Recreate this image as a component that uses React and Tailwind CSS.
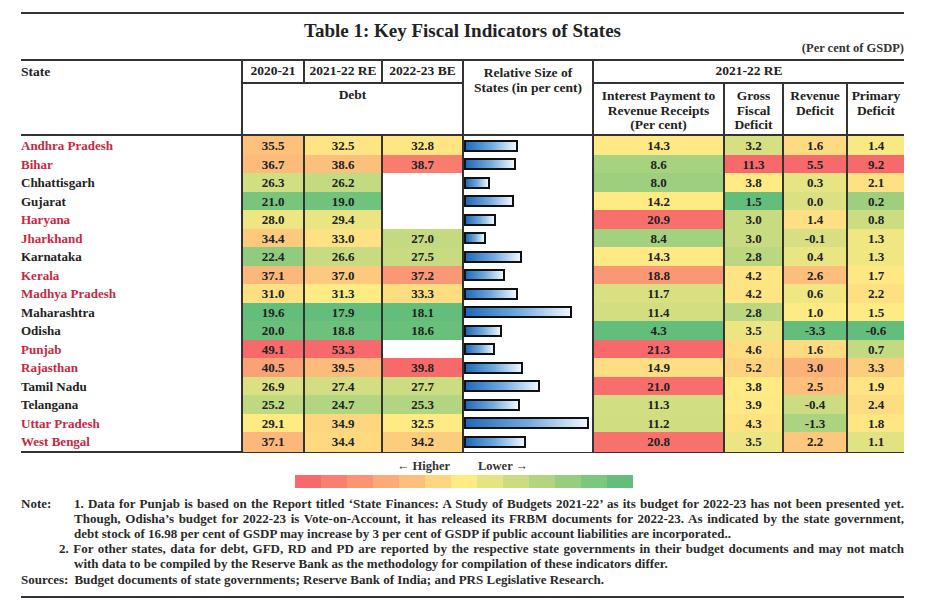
import React from "react";

const COLS =
  "grid grid-cols-[220px_62px_78px_81px_130px_131px_59px_64px_58px]";

const rows = [
  ["Andhra Pradesh", true, 35.5, 32.5, 32.8, 54, 14.3, 3.2, 1.6, 1.4],
  ["Bihar", true, 36.7, 38.6, 38.7, 52, 8.6, 11.3, 5.5, 9.2],
  ["Chhattisgarh", false, 26.3, 26.2, null, 26, 8.0, 3.8, 0.3, 2.1],
  ["Gujarat", false, 21.0, 19.0, null, 50, 14.2, 1.5, 0.0, 0.2],
  ["Haryana", true, 28.0, 29.4, null, 32, 20.9, 3.0, 1.4, 0.8],
  ["Jharkhand", true, 34.4, 33.0, 27.0, 22, 8.4, 3.0, -0.1, 1.3],
  ["Karnataka", false, 22.4, 26.6, 27.5, 58, 14.3, 2.8, 0.4, 1.3],
  ["Kerala", true, 37.1, 37.0, 37.2, 41, 18.8, 4.2, 2.6, 1.7],
  ["Madhya Pradesh", true, 31.0, 31.3, 33.3, 54, 11.7, 4.2, 0.6, 2.2],
  ["Maharashtra", false, 19.6, 17.9, 18.1, 108, 11.4, 2.8, 1.0, 1.5],
  ["Odisha", false, 20.0, 18.8, 18.6, 38, 4.3, 3.5, -3.3, -0.6],
  ["Punjab", true, 49.1, 53.3, null, 31, 21.3, 4.6, 1.6, 0.7],
  ["Rajasthan", true, 40.5, 39.5, 39.8, 59, 14.9, 5.2, 3.0, 3.3],
  ["Tamil Nadu", false, 26.9, 27.4, 27.7, 76, 21.0, 3.8, 2.5, 1.9],
  ["Telangana", false, 25.2, 24.7, 25.3, 56, 11.3, 3.9, -0.4, 2.4],
  ["Uttar Pradesh", true, 29.1, 34.9, 32.5, 125, 11.2, 4.3, -1.3, 1.8],
  ["West Bengal", true, 37.1, 34.4, 34.2, 62, 20.8, 3.5, 2.2, 1.1],
];

const GREEN = [99, 190, 123];
const YEL = [255, 235, 132];
const RED = [248, 105, 107];

function lerp(a, b, t) {
  return a.map((v, i) => Math.round(v + (b[i] - v) * t));
}
function rgb(c) {
  return `rgb(${c[0]},${c[1]},${c[2]})`;
}
function median(arr) {
  const s = [...arr].sort((a, b) => a - b);
  const n = s.length;
  return n % 2 ? s[(n - 1) / 2] : (s[n / 2 - 1] + s[n / 2]) / 2;
}
const numericIdx = [2, 3, 4, 6, 7, 8, 9];
const stats = {};
numericIdx.forEach((k) => {
  const vals = rows.map((r) => r[k]).filter((v) => v !== null);
  stats[k] = { min: Math.min(...vals), max: Math.max(...vals), mid: median(vals) };
});
function cellColor(k, v) {
  if (v === null) return "#ffffff";
  const { min, mid, max } = stats[k];
  if (v <= mid) {
    const t = mid === min ? 1 : (v - min) / (mid - min);
    return rgb(lerp(GREEN, YEL, t));
  }
  const t = (v - mid) / (max - mid);
  return rgb(lerp(YEL, RED, t));
}

const legend = Array.from({ length: 13 }, (_, i) =>
  i <= 6 ? rgb(lerp(RED, YEL, i / 6)) : rgb(lerp(YEL, GREEN, (i - 6) / 6))
);

function NumCell({ k, v }) {
  return (
    <div
      className="border-l-2 border-[#333] flex items-center justify-center text-[13px] text-[#222]"
      style={{ backgroundColor: cellColor(k, v) }}
    >
      {v === null ? "" : v.toFixed(1)}
    </div>
  );
}

export default function App() {
  return (
    <div className="w-[937px] h-[605px] bg-white font-['Liberation_Serif',serif] font-bold text-[#222] overflow-hidden">
      <div className="ml-[21px] w-[883px] pt-[12px]">
        <div className="h-[2px] bg-[#333]" />
        <div className="mt-[5px] h-[24px] leading-[24px] text-center text-[19px]">
          Table 1: Key Fiscal Indicators of States
        </div>
        <div className="-mt-[2px] h-[14px] leading-[14px] text-right text-[12.5px] text-[#333]">
          (Per cent of GSDP)
        </div>
        <div className="mt-[4px] h-[2px] bg-[#333]" />

        {/* Header */}
        <div className={`${COLS} grid-rows-[23px_50px] text-[13.5px] leading-[14.5px]`}>
          <div className="row-span-2 pt-[4px]">State</div>
          <div className="border-l-2 border-b-2 border-[#333] flex items-center justify-center">
            2020-21
          </div>
          <div className="border-l-2 border-b-2 border-[#333] flex items-center justify-center">
            2021-22 RE
          </div>
          <div className="border-l-2 border-b-2 border-[#333] flex items-center justify-center">
            2022-23 BE
          </div>
          <div className="row-span-2 border-l-2 border-[#333] pt-[4px] text-center leading-[15px]">
            Relative Size of
            <br />
            States (in per cent)
          </div>
          <div className="col-span-4 border-l-2 border-b-2 border-[#333] flex items-center justify-center">
            2021-22 RE
          </div>
          <div className="col-span-3 border-l-2 border-[#333] pt-[4px] text-center">
            Debt
          </div>
          <div className="border-l-2 border-[#333] pt-[5px] text-center">
            Interest Payment to
            <br />
            Revenue Receipts
            <br />
            (Per cent)
          </div>
          <div className="border-l-2 border-[#333] pt-[5px] text-center">
            Gross
            <br />
            Fiscal
            <br />
            Deficit
          </div>
          <div className="border-l-2 border-[#333] pt-[5px] text-center">
            Revenue
            <br />
            Deficit
          </div>
          <div className="border-l-2 border-[#333] pt-[5px] text-center">
            Primary
            <br />
            Deficit
          </div>
        </div>
        <div className="h-[2px] bg-[#333]" />

        {/* Body */}
        <div>
          {rows.map((r) => (
            <div key={r[0]} className={`${COLS} h-[18.5px]`}>
              <div
                className={`flex items-center text-[13px] ${
                  r[1] ? "text-[#c8283f]" : "text-[#222]"
                }`}
              >
                {r[0]}
              </div>
              <NumCell k={2} v={r[2]} />
              <NumCell k={3} v={r[3]} />
              <NumCell k={4} v={r[4]} />
              <div className="border-l-2 border-[#333] flex items-center bg-white">
                <div
                  className="h-[12px] border-2 border-[#111] bg-linear-to-r from-[#1b6bbb] via-[#6fa8dc] to-[#eef6fd]"
                  style={{ width: r[5] }}
                />
              </div>
              <NumCell k={6} v={r[6]} />
              <NumCell k={7} v={r[7]} />
              <NumCell k={8} v={r[8]} />
              <NumCell k={9} v={r[9]} />
            </div>
          ))}
        </div>
        <div className="h-[2px] bg-[#333]" />

        {/* Legend */}
        <div className="mt-[6px] h-[14px] leading-[14px] flex text-[12.5px] text-[#333]">
          <span className="w-[429px] text-right">← Higher</span>
          <span className="ml-[28px]">Lower →</span>
        </div>
        <div className="mt-[2px] ml-[274px] h-[13px] flex">
          {legend.map((c, i) => (
            <div key={i} className="w-[26px] h-full" style={{ backgroundColor: c }} />
          ))}
        </div>

        {/* Notes */}
        <div className="mt-[8px] text-[13px] leading-[15.2px] text-[#2a2a2a]">
          <div className="flex">
            <div className="w-[53px] shrink-0">Note:</div>
            <div className="flex-1">
              <div className="text-justify [text-align-last:justify]">
                1. Data for Punjab is based on the Report titled ‘State Finances: A Study of Budgets 2021-22’ as its budget for 2022-23 has not been presented yet.
              </div>
              <div className="text-justify [text-align-last:justify]">
                Though, Odisha’s budget for 2022-23 is Vote-on-Account, it has released its FRBM documents for 2022-23. As indicated by the state government,
              </div>
              <div>
                debt stock of 16.98 per cent of GSDP may increase by 3 per cent of GSDP if public account liabilities are incorporated..
              </div>
              <div className="-ml-[15px] text-justify [text-align-last:justify]">
                2. For other states, data for debt, GFD, RD and PD are reported by the respective state governments in their budget documents and may not match
              </div>
              <div>
                with data to be compiled by the Reserve Bank as the methodology for compilation of these indicators differ.
              </div>
            </div>
          </div>
          <div>
            Sources:<span className="ml-[6px]">Budget documents of state governments; Reserve Bank of India; and PRS Legislative Research.</span>
          </div>
        </div>
        <div className="mt-[9px] h-[2px] bg-[#333]" />
      </div>
    </div>
  );
}
